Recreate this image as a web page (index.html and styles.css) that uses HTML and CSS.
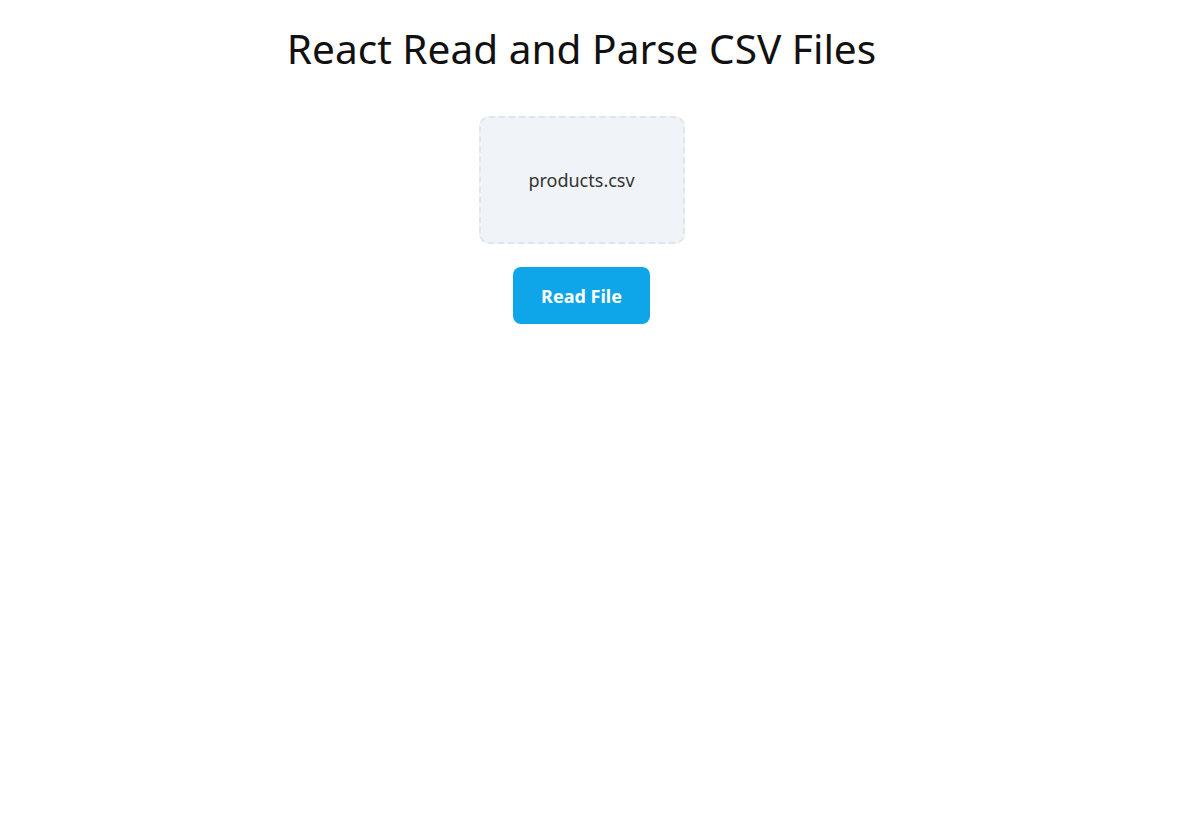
FILE: index.html
```html
<!DOCTYPE html>
<html>
<head>
<meta charset="utf-8">
<link rel="stylesheet" href="styles.css">
</head>
<body>
<main class="app">
  <h1 class="title">React Read and Parse CSV Files</h1>
  <div class="dropzone">products.csv</div>
  <button class="read-btn">Read File</button>
</main>
</body>
</html>
```
FILE: styles.css
```css
* { box-sizing: border-box; }
html, body { margin: 0; padding: 0; background: #fff; }
body { font-family: "Noto Sans", "Open Sans", sans-serif; color: #111; }
.app {
  width: 1163px;
  display: flex;
  flex-direction: column;
  align-items: center;
  padding-top: 22px;
}
.title {
  margin: 0;
  font-weight: 400;
  font-size: 40.6px;
  line-height: 54px;
  color: #111;
}
.dropzone {
  margin-top: 40px;
  width: 206px;
  height: 128px;
  border: 2px dashed #e0e5eb;
  border-radius: 10px;
  background: #f0f4f8;
  display: flex;
  align-items: center;
  justify-content: center;
  font-size: 18px;
  color: #333;
}
.read-btn {
  margin-top: 23px;
  width: 137px;
  height: 57px;
  border: none;
  border-radius: 8px;
  background: #0ea5e9;
  color: #fff;
  font-family: inherit;
  font-weight: 700;
  font-size: 18px;
}
```
